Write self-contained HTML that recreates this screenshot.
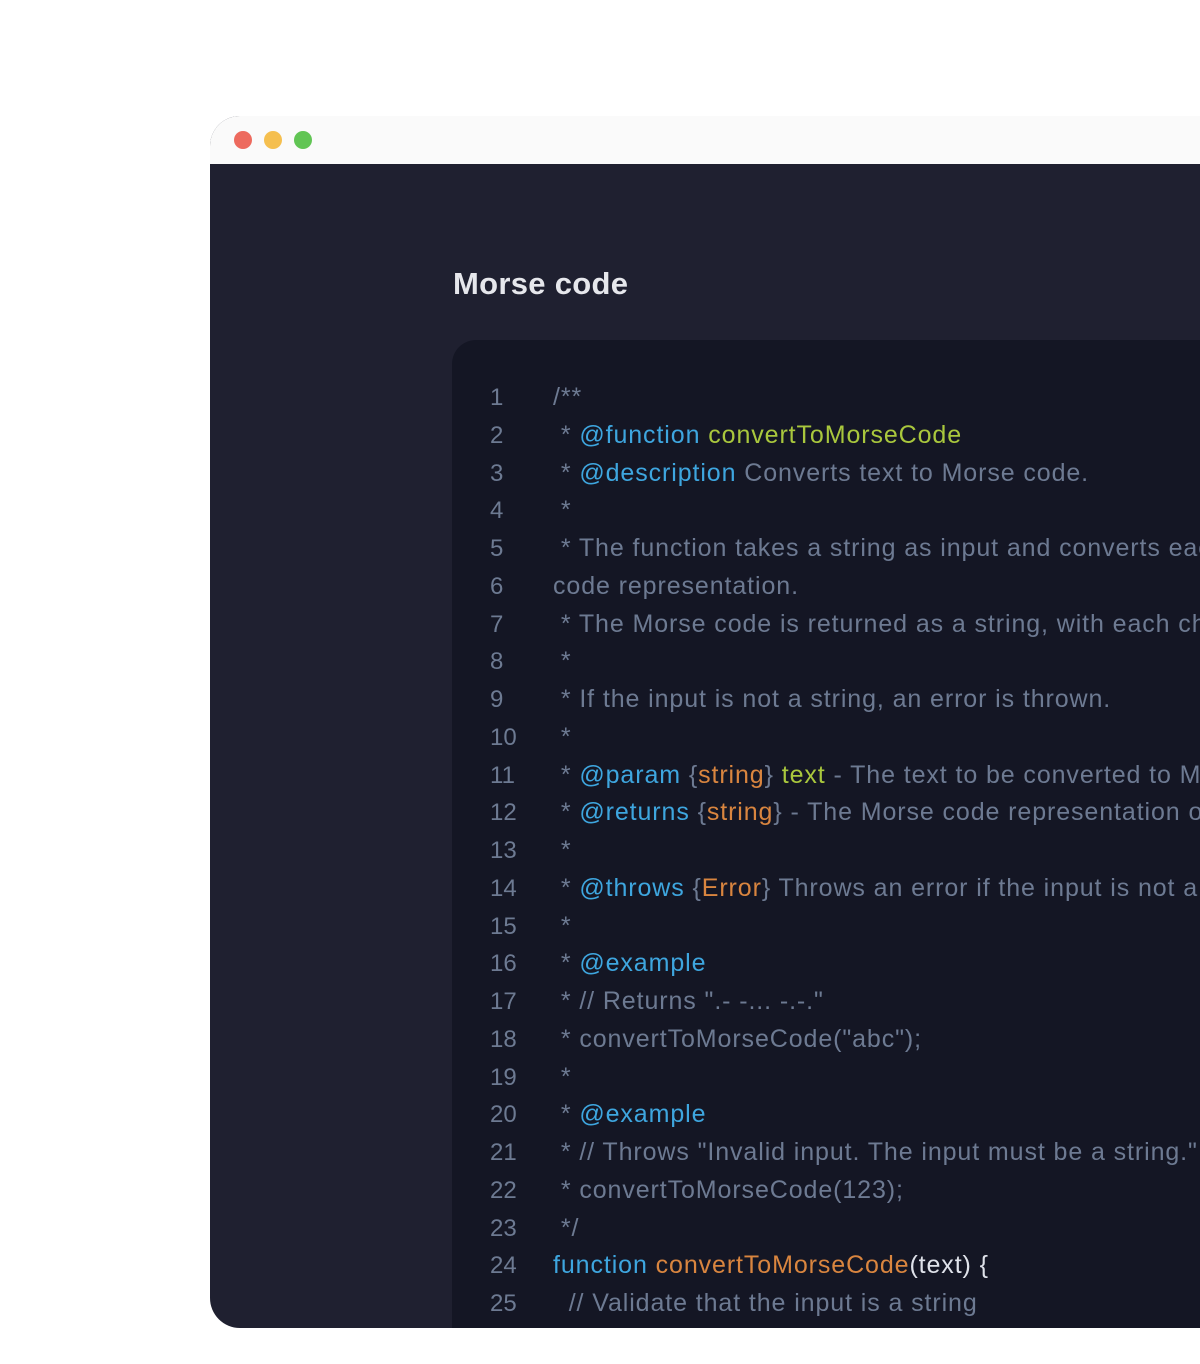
<!DOCTYPE html>
<html><head><style>
html,body{margin:0;padding:0;background:#fff;width:1200px;height:1364px;overflow:hidden;font-family:"Liberation Sans",sans-serif}
.win{position:absolute;left:210px;top:116px;width:990px;height:1212px;border-radius:30px 0 0 30px;overflow:hidden;background:#1f2030}
.bar{height:48px;background:#fafafa}
.dot{position:absolute;top:15px;width:18px;height:18px;border-radius:50%}
h1{position:absolute;left:243px;top:150px;margin:0;font-size:31px;font-weight:600;color:#e6e7ec;letter-spacing:0.3px}
.code{position:absolute;left:242px;top:224px;width:748px;height:1000px;background:#141624;border-radius:24px 0 0 0;overflow:hidden}
.ln{position:absolute;left:38px;top:39px;color:#6d7a92;font-size:24px;line-height:37.75px;white-space:pre}
.tx{position:absolute;left:101px;top:39px;color:#6d7a92;font-size:25px;letter-spacing:0.9px;line-height:37.75px;white-space:pre}
.k{color:#3ea6df}.g{color:#a9c73d}.o{color:#d9853f}.w{color:#dfe2ea}
</style></head><body>
<div class="win">
<div class="bar"></div>
<div class="dot" style="left:24px;background:#ed6a5e"></div>
<div class="dot" style="left:54px;background:#f5bf4f"></div>
<div class="dot" style="left:84px;background:#61c554"></div>
<h1>Morse code</h1>
<div class="code">
<div class="ln">1
2
3
4
5
6
7
8
9
10
11
12
13
14
15
16
17
18
19
20
21
22
23
24
25</div>
<div class="tx">/**
 * <span class="k">@function</span> <span class="g">convertToMorseCode</span>
 * <span class="k">@description</span> Converts text to Morse code.
 *
 * The function takes a string as input and converts each character to its Morse
code representation.
 * The Morse code is returned as a string, with each character separated
 *
 * If the input is not a string, an error is thrown.
 *
 * <span class="k">@param</span> {<span class="o">string</span>} <span class="g">text</span> - The text to be converted to Morse code.
 * <span class="k">@returns</span> {<span class="o">string</span>} - The Morse code representation of the text.
 *
 * <span class="k">@throws</span> {<span class="o">Error</span>} Throws an error if the input is not a string.
 *
 * <span class="k">@example</span>
 * // Returns ".- -... -.-."
 * convertToMorseCode("abc");
 *
 * <span class="k">@example</span>
 * // Throws "Invalid input. The input must be a string."
 * convertToMorseCode(123);
 */
<span class="k">function</span> <span class="o">convertToMorseCode</span><span class="w">(text) {</span>
  // Validate that the input is a string</div>
</div>
</div>
</body></html>
